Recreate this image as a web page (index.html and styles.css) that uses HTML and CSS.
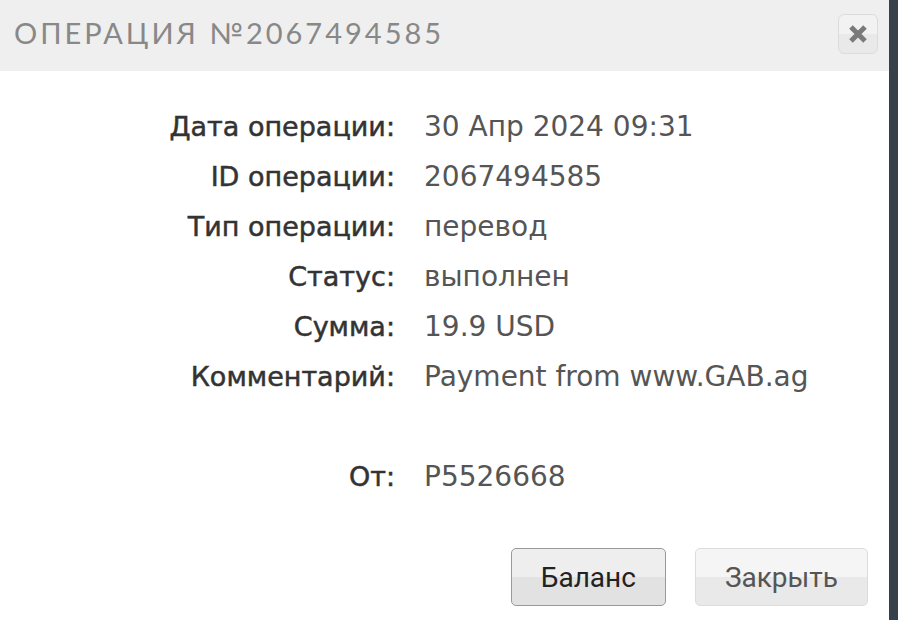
FILE: index.html
```html
<!DOCTYPE html>
<html lang="ru">
<head>
    <meta charset="UTF-8">
    <meta name="viewport" content="width=device-width, initial-scale=1.0">
    <title>Операция №2067494585</title>
    <link rel="stylesheet" href="styles.css">
</head>
<body>
    <div class="modal">
        <div class="modal_header">
            <h2>Операция №2067494585</h2>
            <button class="close_btn" aria-label="Закрыть">
                <svg width="20" height="20" viewBox="0 0 20 20">
                    <path d="M3 3 L17 17 M17 3 L3 17" stroke="#7a7a7a" stroke-width="5"/>
                </svg>
            </button>
        </div>

        <div class="details">
            <div class="label">Дата операции:</div>
            <div class="value">30 Апр 2024 09:31</div>

            <div class="label">ID операции:</div>
            <div class="value">2067494585</div>

            <div class="label">Тип операции:</div>
            <div class="value">перевод</div>

            <div class="label">Статус:</div>
            <div class="value">выполнен</div>

            <div class="label">Сумма:</div>
            <div class="value">19.9 USD</div>

            <div class="label">Комментарий:</div>
            <div class="value">Payment from www.GAB.ag</div>

            <div class="label"></div>
            <div class="value"></div>

            <div class="label">От:</div>
            <div class="value">P5526668</div>
        </div>

        <div class="modal_footer">
            <button class="btn btn_main">Баланс</button>
            <button class="btn">Закрыть</button>
        </div>
    </div>
    <div class="backdrop"></div>
</body>
</html>
```

FILE: styles.css
```css
* {
    margin: 0;
    padding: 0;
    box-sizing: border-box;
}

body {
    display: flex;
    height: 100vh;
    overflow: hidden;
    background-color: #36414a;
}

.modal {
    flex: 0 0 889px;
    background-color: white;
}

.backdrop {
    flex: 1;
}

.modal_header {
    display: flex;
    align-items: center;
    justify-content: space-between;
    height: 71px;
    padding: 0 11px 0 14px;
    background-color: #efefef;
}

.modal_header h2 {
    margin-bottom: 6px;
    font-family: Lato, sans-serif;
    font-weight: normal;
    font-size: 29px;
    letter-spacing: 3px;
    text-transform: uppercase;
    color: #888;
}

.close_btn {
    display: flex;
    align-items: center;
    justify-content: center;
    width: 40px;
    height: 40px;
    margin-bottom: 4px;
    border: 1px solid #dcdcdc;
    border-radius: 6px;
    background: linear-gradient(#f2f2f2 50%, #e9e9e9 50%);
    cursor: pointer;
}

.details {
    display: grid;
    grid-template-columns: 395px 1fr;
    grid-auto-rows: 50px;
    column-gap: 29px;
    align-items: center;
    padding-top: 30px;
    font-family: "DejaVu Sans", sans-serif;
    font-size: 28px;
}

.details .label {
    text-align: right;
    font-size: 27px;
    color: #333;
    -webkit-text-stroke: 0.5px #333;
}

.details .value {
    color: #555;
}

.modal_footer {
    display: flex;
    justify-content: flex-end;
    gap: 29px;
    padding: 47px 21px 0 0;
}

.btn {
    height: 58px;
    padding: 0 29px;
    border: 1px solid #dcdcdc;
    border-radius: 5px;
    background: linear-gradient(#f5f5f5 50%, #e9e9e9 50%);
    font-family: Roboto, sans-serif;
    font-size: 28px;
    color: #555;
    cursor: pointer;
}

.btn_main {
    border-color: #999;
    background: linear-gradient(#eeeeee 50%, #e2e2e2 50%);
    color: #222;
}
```
